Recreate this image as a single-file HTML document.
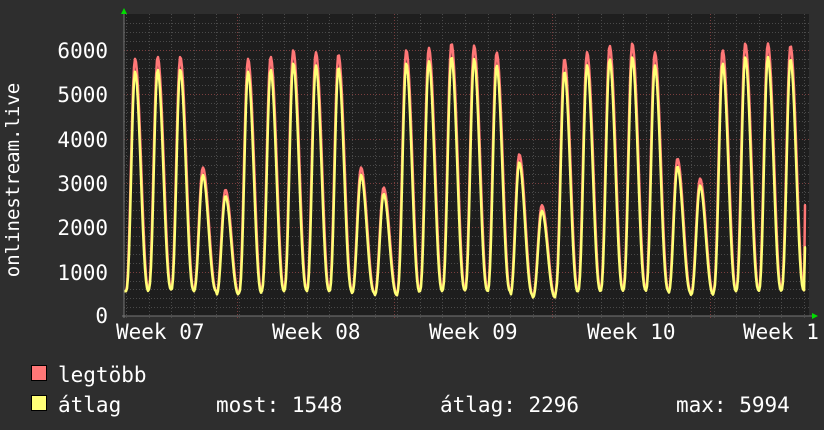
<!DOCTYPE html>
<html><head><meta charset="utf-8"><style>
html,body{margin:0;padding:0;background:#2e2e2e;}
svg{display:block}
text{font-family:"DejaVu Sans Mono","Liberation Mono",monospace;fill:#fff;font-size:21px}
</style></head><body>
<svg id="g" width="824" height="430" xmlns="http://www.w3.org/2000/svg">
<rect width="824" height="430" fill="#2e2e2e"/>
<rect x="124" y="14" width="685" height="302" fill="#1e1e1e"/>
<g id="grid"></g>
<polyline id="red" fill="none" stroke="#ff7777" stroke-width="2.5" stroke-linejoin="round"/>
<polyline id="yel" fill="none" stroke="#ffff77" stroke-width="2.5" stroke-linejoin="round"/>
<line x1="124" y1="14" x2="124" y2="318" stroke="#777" stroke-width="1"/>
<line x1="122" y1="316" x2="812" y2="316" stroke="#777" stroke-width="1"/>
<polygon points="121,14 127,14 124,8" fill="#00dd00"/>
<polygon points="812,313 812,319 818,316" fill="#00dd00"/>
<g text-anchor="end">
<text x="108" y="58">6000</text>
<text x="108" y="102">5000</text>
<text x="108" y="147">4000</text>
<text x="108" y="191">3000</text>
<text x="108" y="235">2000</text>
<text x="108" y="280">1000</text>
<text x="108" y="323">0</text>
</g>
<text transform="translate(19,180) rotate(-90)" text-anchor="middle" style="font-size:19px">onlinestream.live</text>
<text x="116" y="339">Week 07</text>
<text x="272" y="339">Week 08</text>
<text x="429" y="339">Week 09</text>
<text x="587" y="339">Week 10</text>
<text x="743" y="339">Week 1</text>
<rect x="31.5" y="365.5" width="15" height="15" fill="#ff7777" stroke="#000"/>
<rect x="31.5" y="395.5" width="15" height="15" fill="#ffff77" stroke="#000"/>
<text x="58" y="382">legtöbb</text>
<text x="58" y="412">átlag</text>
<text x="216" y="412">most: 1548</text>
<text x="440" y="412">átlag: 2296</text>
<text x="676" y="412">max: 5994</text>
</svg>
<script>
var ns="http://www.w3.org/2000/svg",g=document.getElementById('grid');
function ln(x1,y1,x2,y2,c){var l=document.createElementNS(ns,'line');l.setAttribute('x1',x1);l.setAttribute('y1',y1);l.setAttribute('x2',x2);l.setAttribute('y2',y2);l.setAttribute('stroke',c);l.setAttribute('stroke-dasharray','1,2');l.setAttribute('stroke-width','1');g.appendChild(l);}
var Y=function(v){return 316-v*0.04433;};
for(var v=200;v<=6600;v+=200){var y=Math.round(Y(v))+0.5;if(y<14)break;ln(124,y,809,y,v%1000==0?'#7a3e3e':'#4a4a4a');}
var D=22.6,X0=126;
for(var k=0;k<31;k++){var x=Math.round(X0+k*D)+0.5;if(x>809)break;ln(x,14,x,319,'#4a4a4a');}
[237,394,552,710].forEach(function(x){ln(x+0.5,14,x+0.5,319,'#7a3e3e');});
var peaks=[5800,5850,5850,3350,2850,5800,5850,6000,5950,5900,3350,2900,6000,6050,6150,6100,5950,3650,2500,5800,5950,6100,6150,5950,3550,3100,6000,6150,6150,6100,6000];
var trough=[560,600,580,560,480,520,560,580,560,560,520,470,540,560,580,570,560,470,420,540,560,570,590,570,520,480,560,580,570,580,560];
var r=[],yv=[];
for(var x=124;x<=806;x++){var t=(x-X0)/D,k=Math.floor(t),f=t-k;if(k<0){k=0;f=0;}
var p=0.4,u=f<p?f/p:(1-f)/(1-p);var b=Math.pow((1-Math.cos(Math.PI*u))/2,1.1);
var P=peaks[k],T=trough[k];var vr=T+(P-T)*b;var vy=T+(P*0.95-T)*Math.pow(b,1.15);
if(x>=805){vr=2500;vy=1548;}
r.push(x+','+Y(vr).toFixed(1));yv.push(x+','+Y(vy).toFixed(1));}
document.getElementById('red').setAttribute('points',r.join(' '));
document.getElementById('yel').setAttribute('points',yv.join(' '));
</script>
</body></html>
